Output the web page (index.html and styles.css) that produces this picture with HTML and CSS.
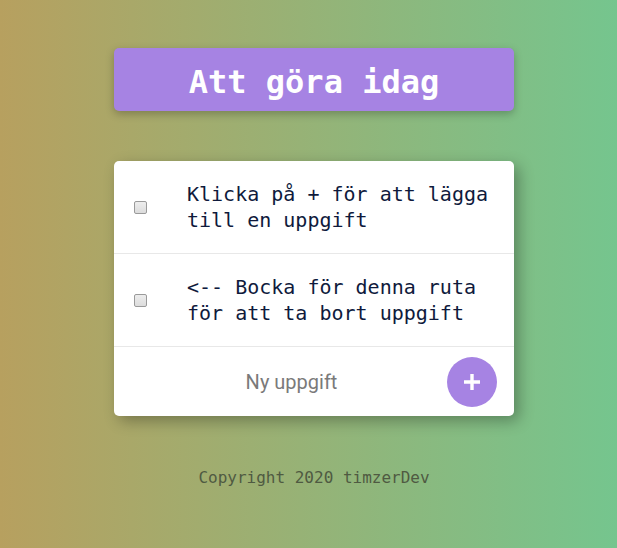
FILE: index.html
```html
<!DOCTYPE html>
<html>
<head>
<meta charset="utf-8">
<link rel="stylesheet" href="styles.css">
</head>
<body>
<div class="page">
  <h1 class="heading">Att göra idag</h1>
  <div class="card">
    <div class="item">
      <input type="checkbox" class="check">
      <p class="item-text">Klicka på + för att lägga till en uppgift</p>
    </div>
    <div class="item">
      <input type="checkbox" class="check">
      <p class="item-text">&lt;-- Bocka för denna ruta för att ta bort uppgift</p>
    </div>
    <form class="add-form">
      <input type="text" class="new-input" placeholder="Ny uppgift">
      <button type="button" class="add-btn" aria-label="Lägg till">
        <svg width="18" height="18" viewBox="0 0 18 18"><path d="M9 1V17M1 9H17" stroke="#fff" stroke-width="3.4" stroke-linecap="butt"/></svg>
      </button>
    </form>
  </div>
  <footer class="footer">Copyright 2020 timzerDev</footer>
</div>
</body>
</html>
```
FILE: styles.css
```css
html, body {
  margin: 0;
  padding: 0;
  height: 100%;
}
body {
  background: linear-gradient(to right, #b7a05f, #75c58e);
  font-family: "DejaVu Sans Mono", "Liberation Mono", monospace;
}
.page {
  display: flex;
  flex-direction: column;
  align-items: center;
  padding-top: 48px;
  padding-left: 11px;
}
.heading {
  margin: 0;
  width: 400px;
  height: 63px;
  box-sizing: border-box;
  background: #a683e3;
  border-radius: 5px;
  box-shadow: 0 3px 8px rgba(0, 0, 0, 0.25);
  color: #fff;
  font-size: 32px;
  font-weight: bold;
  display: flex;
  align-items: center;
  justify-content: center;
  padding-top: 4px;
}
.card {
  margin-top: 50px;
  width: 400px;
  background: #fff;
  border-radius: 5px;
  box-shadow: 5px 5px 15px rgba(0, 0, 0, 0.3);
  overflow: hidden;
}
.item {
  display: flex;
  align-items: center;
  height: 92px;
  border-bottom: 1px solid #e8e8e8;
}
.check {
  appearance: none;
  -webkit-appearance: none;
  margin: 0 0 0 20px;
  width: 13px;
  height: 13px;
  box-sizing: border-box;
  border: 1px solid #9a9a9a;
  border-radius: 2px;
  background: linear-gradient(#ededed, #dcdcdc);
  flex-shrink: 0;
}
.item-text {
  margin: 0 0 0 40px;
  color: #0f1a3c;
  font-size: 20px;
  line-height: 26px;
  width: 312px;
}
.add-form {
  display: flex;
  align-items: center;
  height: 69px;
  margin: 0;
  padding: 0 17px 0 0;
}
.new-input {
  flex: 1;
  border: none;
  outline: none;
  text-align: center;
  font-family: Roboto, "Liberation Sans", sans-serif;
  font-size: 20px;
  color: #333;
  padding: 0 0 0 34px;
  background: transparent;
}
.new-input::placeholder {
  color: #7a7a7a;
}
.add-btn {
  width: 50px;
  height: 50px;
  border-radius: 50%;
  border: none;
  background: #a683e3;
  display: flex;
  align-items: center;
  justify-content: center;
  padding: 0;
  margin-left: 12px;
}
.footer {
  margin-top: 52px;
  font-size: 16px;
  color: #4f5a42;
  text-align: center;
}
```
